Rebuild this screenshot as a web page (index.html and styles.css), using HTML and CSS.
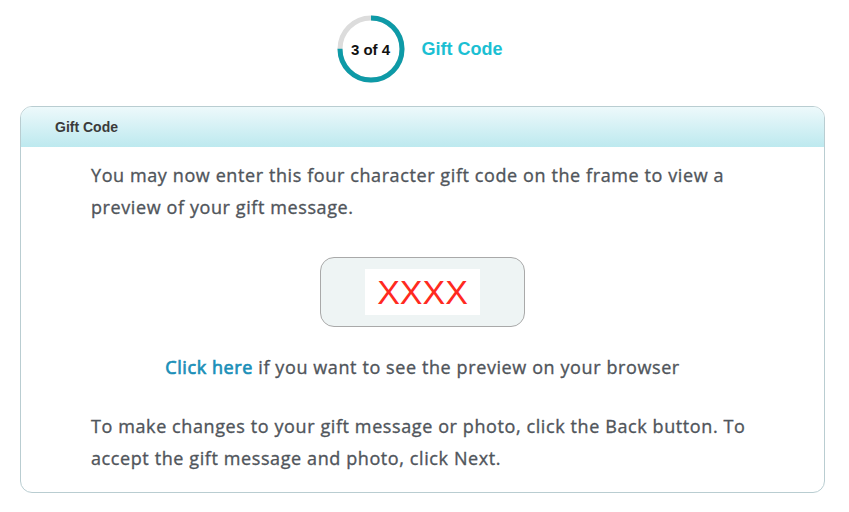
FILE: index.html
```html
<!DOCTYPE html>
<html>
<head>
<meta charset="utf-8">
<link rel="stylesheet" href="styles.css">
</head>
<body>
<div class="steps">
  <div class="ring">
    <svg width="68" height="68" viewBox="0 0 68 68">
      <circle cx="34" cy="34" r="31" fill="none" stroke="#dcdcdc" stroke-width="5"/>
      <circle cx="34" cy="34" r="31" fill="none" stroke="#0e9aa7" stroke-width="5" stroke-dasharray="146.1 48.7" transform="rotate(-90 34 34)"/>
    </svg>
    <span class="ring-label">3 of 4</span>
  </div>
  <span class="step-title">Gift Code</span>
</div>
<div class="card">
  <div class="card-header">Gift Code</div>
  <div class="card-body">
    <p class="para first">You may now enter this four character gift code on the frame to view a preview of your gift message.</p>
    <div class="code-wrap">
      <div class="code-box"><span class="code">XXXX</span></div>
    </div>
    <p class="para center"><a class="link" href="#">Click here</a> if you want to see the preview on your browser</p>
    <p class="para last">To make changes to your gift message or photo, click the Back button. To accept the gift message and photo, click Next.</p>
  </div>
</div>
</body>
</html>
```
FILE: styles.css
```css
body {
  margin: 8px 24px 0 20px;
  background: #fff;
  font-family: "Open Sans", "Liberation Sans", sans-serif;
}
.steps {
  display: flex;
  justify-content: center;
  align-items: center;
  gap: 17px;
  padding-top: 7px;
  padding-right: 6px;
}
.ring {
  position: relative;
  width: 68px;
  height: 68px;
}
.ring svg { display: block; }
.ring-label {
  position: absolute;
  inset: 0;
  display: flex;
  align-items: center;
  justify-content: center;
  font-family: "Liberation Sans", Arial, sans-serif;
  font-weight: bold;
  font-size: 15px;
  color: #111;
}
.step-title {
  font-family: "Liberation Sans", Arial, sans-serif;
  font-weight: bold;
  font-size: 18px;
  color: #1bbfd3;
}
.card {
  margin-top: 23px;
  border: 1px solid #b9cdd1;
  border-radius: 12px;
  overflow: hidden;
}
.card-header {
  height: 40px;
  display: flex;
  align-items: center;
  padding-left: 34px;
  background: linear-gradient(#edf9fb, #bde9ef);
  font-family: "Liberation Sans", Arial, sans-serif;
  font-weight: bold;
  font-size: 14px;
  color: #3b3b3b;
}
.card-body {
  padding: 12px 70px 18px 70px;
}
.para {
  margin: 0;
  font-size: 18px;
  letter-spacing: 0.6px;
  line-height: 32px;
  font-weight: 400;
  -webkit-text-stroke: 0.35px currentColor;
  color: #50555b;
}
.center { text-align: center; margin-top: 24px; }
.last { margin-top: 27px; }
.link {
  color: #1a8fb8;
  text-decoration: none;
  -webkit-text-stroke: 0.7px currentColor;
}
.code-wrap {
  display: flex;
  justify-content: center;
  margin-top: 34px;
}
.code-box {
  width: 203px;
  height: 68px;
  border: 1px solid #a9a9a9;
  border-radius: 14px;
  background: #eef4f4;
  display: flex;
  align-items: center;
  justify-content: center;
}
.code {
  background: #fff;
  width: 115px;
  height: 46px;
  display: flex;
  align-items: center;
  justify-content: center;
  font-family: "Liberation Sans", Arial, sans-serif;
  font-size: 34px;
  color: #ff2a1f;
}
```
